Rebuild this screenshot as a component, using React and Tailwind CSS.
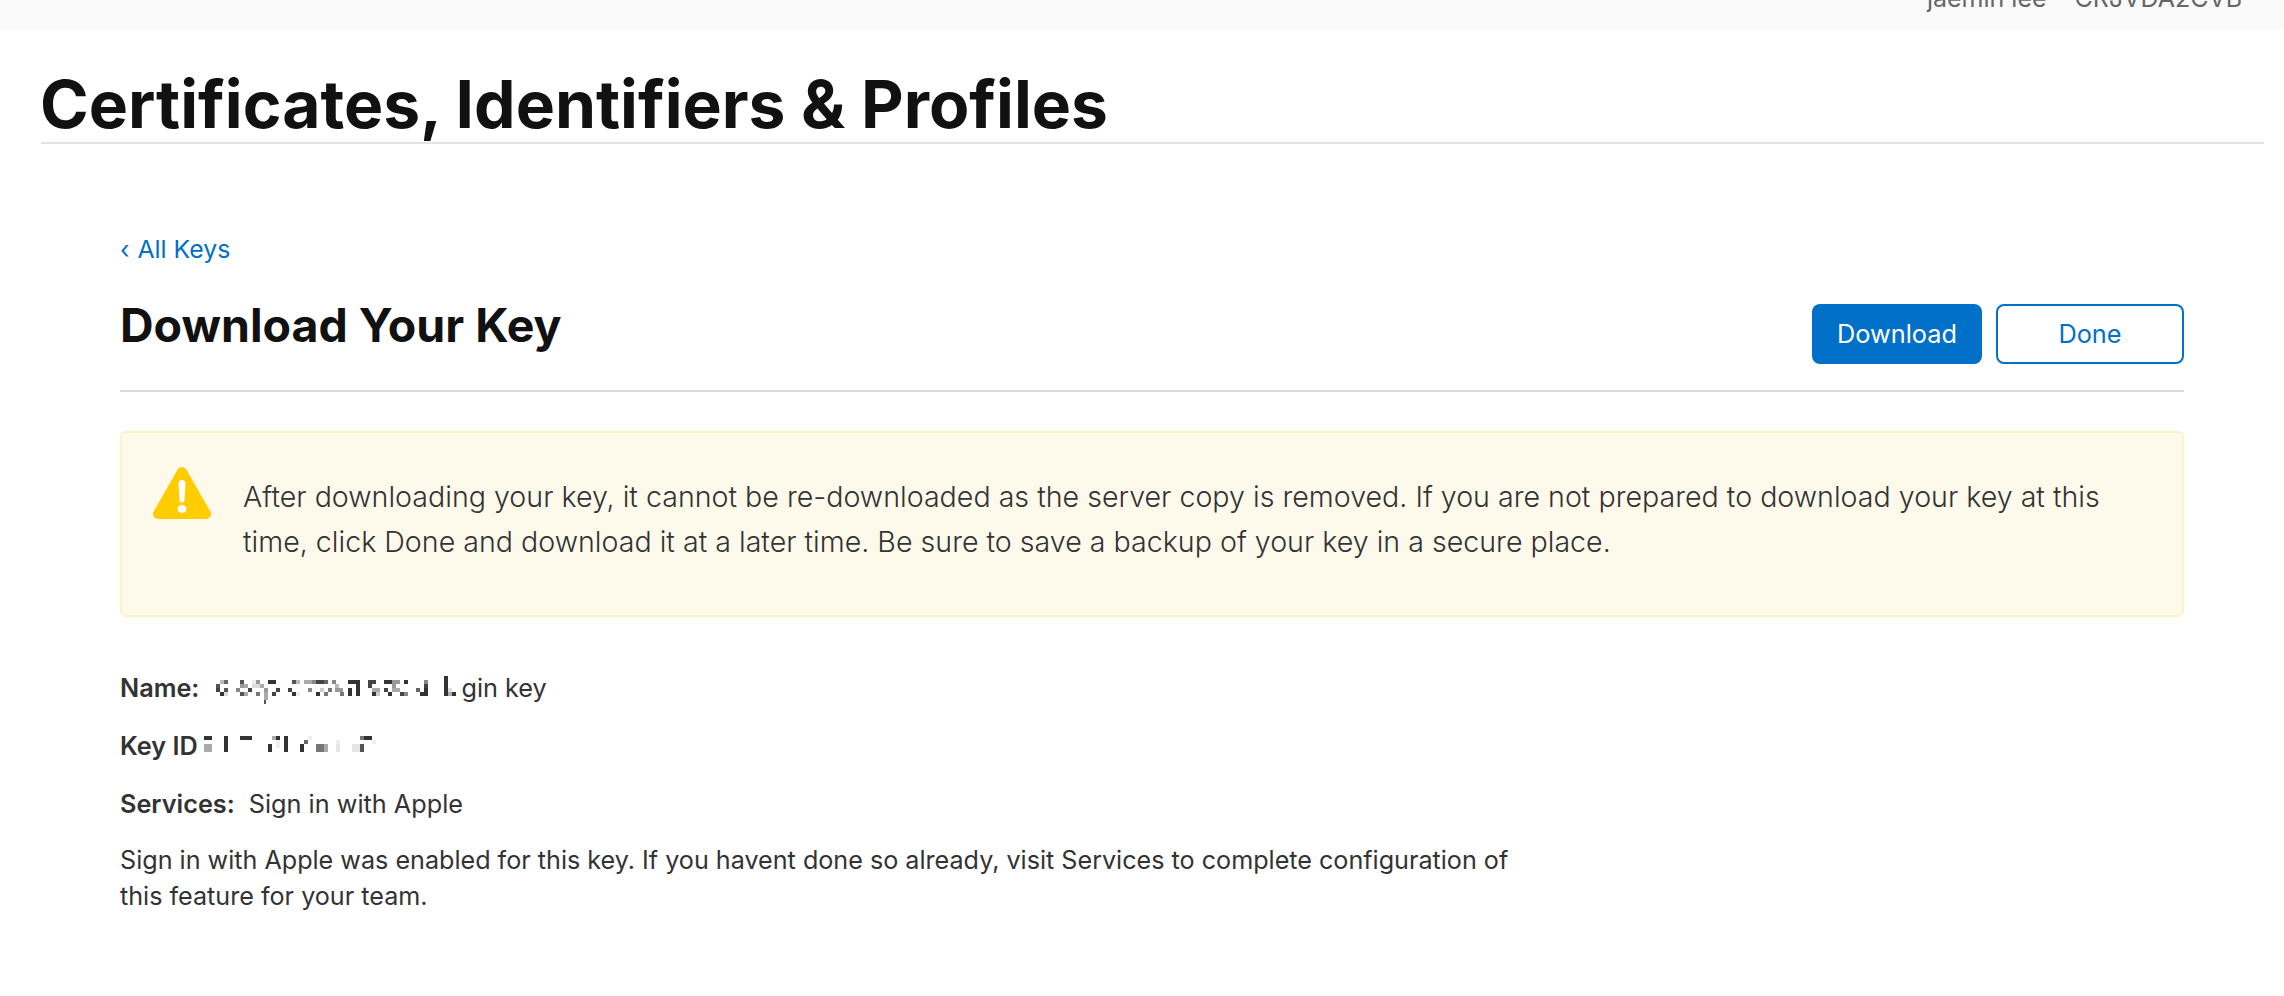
import React from 'react';

// redacted text, [x, y, width, fill] in page pixels, 4px tall cells
const nameCells = [
  [220, 680, 4, '#bbb'], [224, 680, 4, '#666'], [240, 680, 4, '#555'], [252, 680, 4, '#eee'], [256, 680, 4, '#999'], [268, 680, 8, '#333'],
  [292, 680, 4, '#555'], [296, 680, 4, '#bbb'], [304, 680, 8, '#aaa'], [312, 680, 4, '#888'], [316, 680, 8, '#444'], [324, 680, 4, '#666'], [332, 680, 4, '#888'],
  [216, 684, 4, '#555'], [240, 684, 4, '#999'], [244, 684, 4, '#aaa'], [252, 684, 8, '#ddd'], [260, 684, 4, '#aaa'],
  [216, 688, 4, '#444'], [224, 688, 4, '#555'], [236, 688, 4, '#888'], [248, 688, 4, '#444'], [264, 688, 4, '#999'], [276, 688, 4, '#444'],
  [288, 688, 4, '#444'], [308, 688, 4, '#888'], [320, 688, 4, '#ccc'], [328, 688, 4, '#777'],
  [220, 692, 4, '#333'], [224, 692, 4, '#ddd'], [240, 692, 4, '#555'], [244, 692, 4, '#aaa'], [256, 692, 4, '#777'], [264, 692, 4, '#aaa'], [272, 692, 4, '#444'],
  [292, 692, 4, '#333'], [296, 692, 4, '#eee'], [316, 692, 4, '#333'], [324, 692, 4, '#777'],
  [264, 696, 4, '#aaa'], [264, 700, 2, '#555'],
  [444, 676, 4, '#333'],
  [348, 680, 12, '#333'], [368, 680, 8, '#444'], [384, 680, 8, '#333'], [392, 680, 8, '#999'], [404, 680, 4, '#333'], [424, 680, 4, '#888'], [444, 680, 4, '#333'],
  [335, 684, 4, '#bbb'], [356, 684, 4, '#333'], [368, 684, 4, '#444'], [392, 684, 4, '#999'], [424, 684, 4, '#444'], [444, 684, 4, '#333'],
  [335, 688, 8, '#999'], [348, 688, 4, '#333'], [356, 688, 4, '#333'], [372, 688, 8, '#aaa'], [384, 688, 4, '#444'], [392, 688, 8, '#aaa'], [416, 688, 4, '#666'], [424, 688, 4, '#333'], [444, 688, 4, '#333'], [448, 688, 4, '#ddd'],
  [340, 692, 4, '#777'], [348, 692, 4, '#333'], [356, 692, 4, '#333'], [372, 692, 4, '#333'], [376, 692, 4, '#ccc'], [388, 692, 4, '#333'], [400, 692, 4, '#444'], [404, 692, 4, '#888'],
  [420, 692, 8, '#333'], [444, 692, 4, '#333'], [448, 692, 4, '#aaa'], [452, 692, 4, '#333'],
];

const keyCells = [
  [204, 736, 8, '#333'], [224, 736, 4, '#333'], [240, 736, 12, '#333'], [272, 736, 4, '#aaa'], [276, 736, 4, '#333'], [284, 736, 4, '#333'], [308, 736, 4, '#eee'], [360, 736, 4, '#777'], [364, 736, 8, '#333'],
  [224, 740, 4, '#333'], [276, 740, 4, '#eee'], [284, 740, 4, '#333'], [304, 740, 4, '#666'], [336, 740, 4, '#eee'], [372, 740, 4, '#eee'],
  [204, 744, 8, '#aaa'], [224, 744, 4, '#333'], [268, 744, 4, '#333'], [276, 744, 4, '#eee'], [284, 744, 4, '#333'], [300, 744, 4, '#333'], [316, 744, 8, '#777'], [324, 744, 4, '#aaa'], [336, 744, 4, '#e5e5e5'], [352, 744, 8, '#e5e5e5'], [360, 744, 4, '#555'],
  [204, 748, 8, '#aaa'], [224, 748, 4, '#333'], [268, 748, 4, '#333'], [284, 748, 4, '#333'], [300, 748, 4, '#333'], [316, 748, 8, '#777'], [324, 748, 4, '#aaa'], [336, 748, 4, '#e5e5e5'], [352, 748, 8, '#e5e5e5'], [360, 748, 4, '#555'],
];

const Mosaic = () => (
  <svg className="absolute left-0 -top-[1px]" width="480" height="90" viewBox="120 672 480 90" aria-hidden="true">
    {[...nameCells, ...keyCells].map(([x, y, w, fill], i) => (
      <rect key={i} x={x} y={y} width={w} height="4" fill={fill} />
    ))}
  </svg>
);

const WarningIcon = () => (
  <svg width="58" height="53" viewBox="0 0 58 53" className="shrink-0">
    <path d="M29 6L53 48H5Z" fill="#ffcc00" stroke="#ffcc00" strokeWidth="10" strokeLinejoin="round" />
    <path d="M25.5 17.5a3.5 3.5 0 0 1 7 0L31.5 34a2.5 2.5 0 0 1-5 0Z" fill="#fff" />
    <ellipse cx="29" cy="43" rx="4.5" ry="4" fill="#fff" />
  </svg>
);

export default function App() {
  return (
    <div className="min-h-[996px] bg-white font-['Inter',sans-serif] text-[#333]">
      {/* Top bar */}
      <div className="h-[30px] bg-[#fafafa] overflow-hidden flex justify-end pr-[42px] text-[25px] leading-[30px] text-[#666]">
        <div className="flex gap-[28px] -mt-[17px]">
          <span>jaemin lee</span>
          <span>CRJVDA2CVB</span>
        </div>
      </div>

      {/* Page title */}
      <div className="ml-[41px] mr-[20px] h-[114px] border-b-2 border-[#e3e3e3]">
        <h1 className="pt-[32px] -ml-[1px] text-[65.9px] leading-[84px] font-bold text-[#111]">
          Certificates, Identifiers &amp; Profiles
        </h1>
      </div>

      <div className="ml-[120px] mr-[100px] pt-[90px]">
        <a className="block text-[24.8px] leading-[30px] text-[#0070c9]">
          <span className="mr-[1px]">‹</span> All Keys
        </a>

        <div className="flex justify-between h-[128px] border-b-2 border-[#dcdcdc]">
          <h2 className="pt-[33px] text-[46.5px] leading-[56px] font-bold text-[#111]">Download Your Key</h2>
          <div className="flex gap-[14px] pt-[40px]">
            <button className="w-[170px] h-[60px] rounded-[8px] bg-[#0070c9] text-white text-[25.3px]">Download</button>
            <button className="w-[188px] h-[60px] rounded-[8px] border-2 border-[#0070c9] text-[#0070c9] text-[25.3px]">Done</button>
          </div>
        </div>

        {/* Warning */}
        <div className="mt-[39px] h-[186px] rounded-[6px] border-2 border-[#fdf3c5] bg-[#fefaeb] flex pl-[31px] pt-[33px]">
          <WarningIcon />
          <p className="ml-[32px] mt-[8px] w-[1880px] text-[28.6px] leading-[45px] font-light text-[#333]">
            After downloading your key, it cannot be re-downloaded as the server copy is removed. If you are not prepared to download your key at this time, click Done and download it at a later time. Be sure to save a backup of your key in a secure place.
          </p>
        </div>

        {/* Details */}
        <div className="relative mt-[56px] text-[25.25px] leading-[30px]">
          <p><b className="font-semibold">Name:</b><span className="ml-[262px]">gin key</span></p>
          <p className="mt-[28px]"><b className="font-semibold">Key ID</b></p>
          <p className="mt-[28px]"><b className="font-semibold">Services:</b><span className="ml-[14px]">Sign in with Apple</span></p>
          <p className="mt-[23px] w-[1420px] text-[25.15px] leading-[36px]">
            Sign in with Apple was enabled for this key. If you havent done so already, visit Services to complete configuration of this feature for your team.
          </p>
          <Mosaic />
        </div>
      </div>
    </div>
  );
}
